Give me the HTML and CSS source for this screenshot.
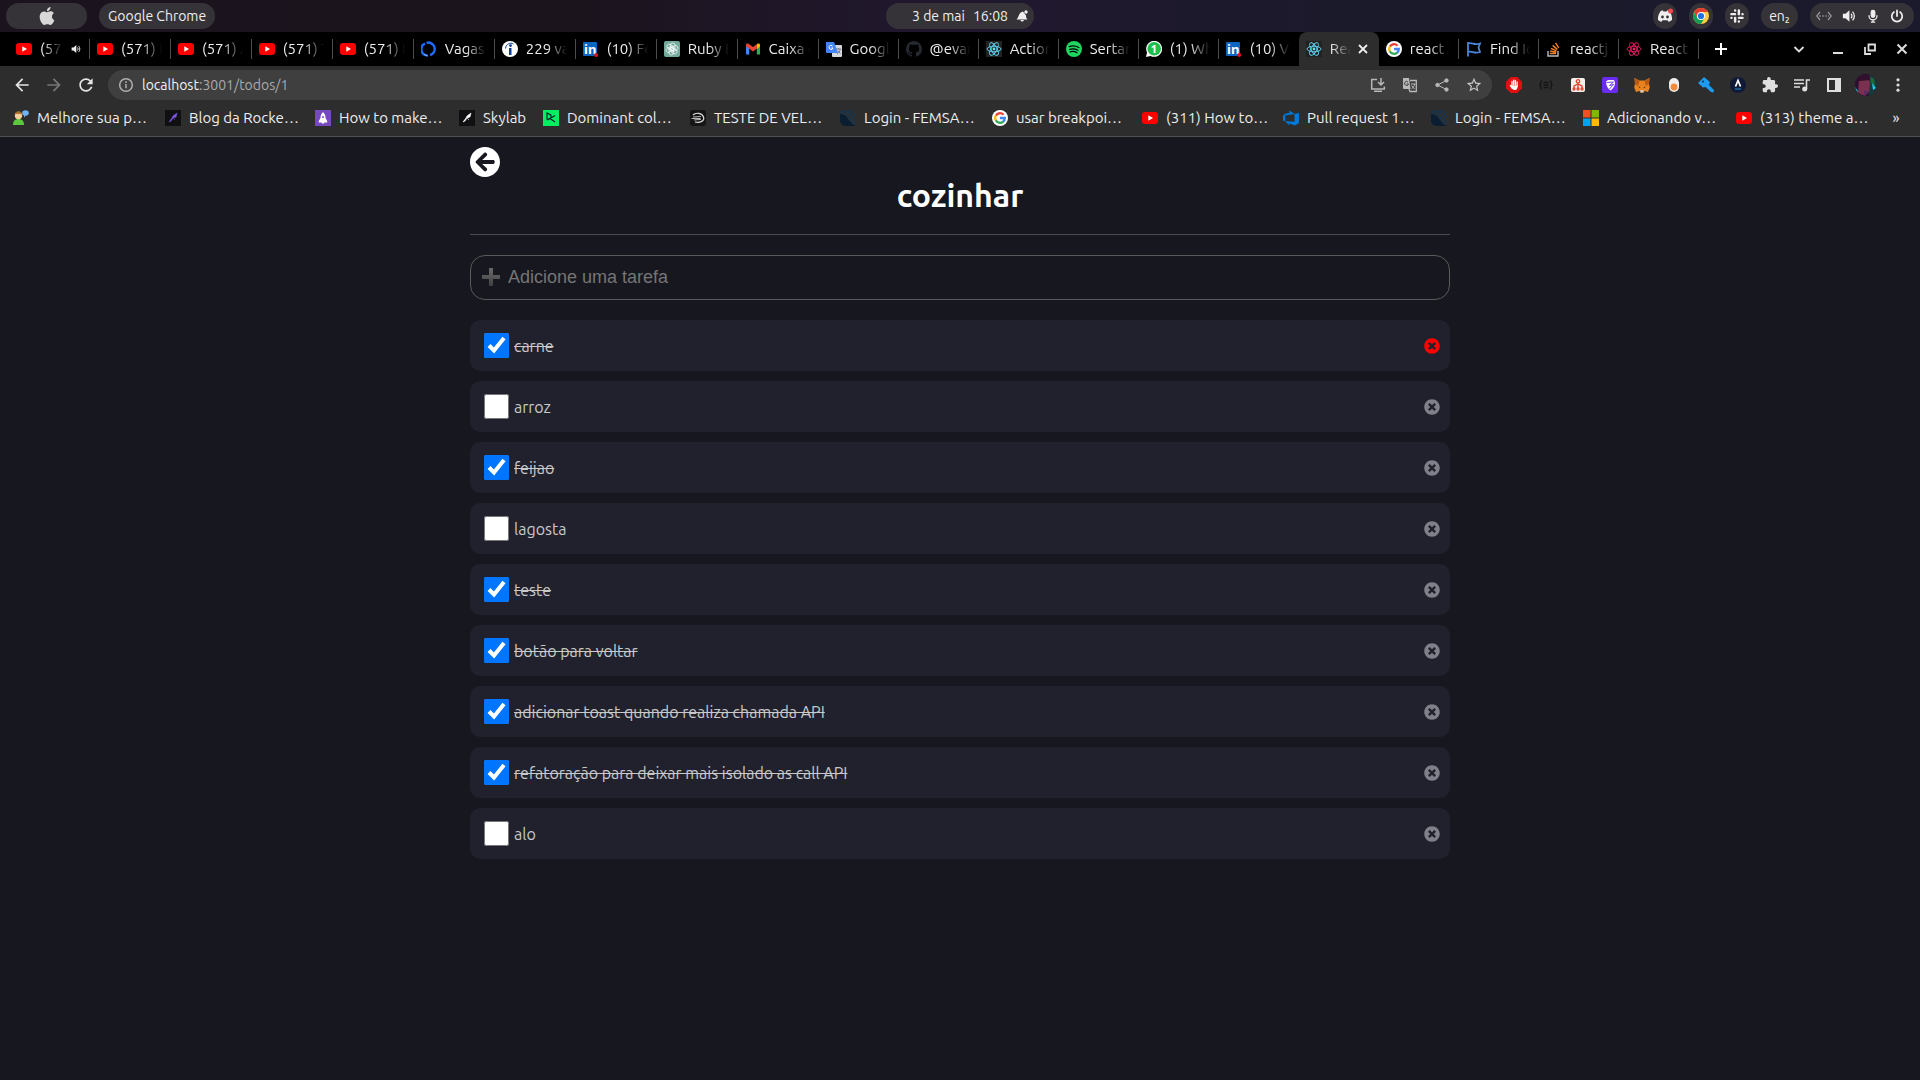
FILE: index.html
```html
<!DOCTYPE html>
<html lang="pt-BR">
<head>
<meta charset="utf-8">
<title>React App</title>
<link rel="stylesheet" href="styles.css">
</head>
<body>
<svg class="sprite" aria-hidden="true">
  <symbol id="youtube" viewBox="0 0 16 16"><rect y="2" width="16" height="12" rx="3" fill="#f00"/><path d="M6.3 5.3v5.4L11 8z" fill="#fff"/></symbol>
  <symbol id="google" viewBox="0 0 16 16"><circle cx="8" cy="8" r="8" fill="#fff"/><g fill="none" stroke-width="2.3"><path d="M3.9 5.6A4.8 4.8 0 0 1 11.5 4.7" stroke="#ea4335"/><path d="M3.9 5.5a4.8 4.8 0 0 0 0 5" stroke="#fbbc05"/><path d="M3.8 10.3a4.8 4.8 0 0 0 7.4 1.3" stroke="#34a853"/><path d="M8 8h4.8a4.8 4.8 0 0 1-1.8 3.8" stroke="#4285f4"/></g></symbol>
  <symbol id="linkedin" viewBox="0 0 16 16"><rect width="14" height="14" x="0" y="1" rx="1" fill="#0a66c2"/><text x="1" y="13" font-size="13" font-weight="700" font-family="Noto Sans, sans-serif" fill="#fff">in</text><circle cx="13.2" cy="14" r="2" fill="#e0101c"/></symbol>
  <symbol id="react" viewBox="0 0 16 16"><circle cx="8" cy="8" r="1.4" fill="currentColor"/><g fill="none" stroke="currentColor" stroke-width=".9"><ellipse cx="8" cy="8" rx="7" ry="2.8"/><ellipse cx="8" cy="8" rx="7" ry="2.8" transform="rotate(60 8 8)"/><ellipse cx="8" cy="8" rx="7" ry="2.8" transform="rotate(120 8 8)"/></g></symbol>
  <symbol id="femsa" viewBox="0 0 16 16"><path d="M0 4c5 0 7 3 9 6s4 5 7 6H6C2 16 0 13 0 10z" fill="#0b1d30"/><path d="M1 1c7 0 9 3 11 6s3 4 4 4M6 0c5 0 8 3 10 7M0 3c6 0 8 3 10 6s4 5 6 5" fill="none" stroke="#12395a" stroke-width="1.2"/></symbol>
  <symbol id="rocketseat" viewBox="0 0 16 16"><rect width="16" height="16" fill="#101012"/><path d="M4 12l3-4 1-2 4-3-1 4-3 1-2 3zM8 8l2 2" fill="currentColor" stroke="currentColor" stroke-width=".6"/></symbol>
  <symbol id="remove" viewBox="0 0 512 512"><path fill="currentColor" d="M256 8C119 8 8 119 8 256s111 248 248 248 248-111 248-248S393 8 256 8zm121.600 313.100c4.700 4.700 4.700 12.300 0 17L338 377.600c-4.700 4.700-12.300 4.700-17 0L256 312l-65.100 65.600c-4.700 4.700-12.300 4.700-17 0L134.400 338c-4.700-4.700-4.700-12.300 0-17l65.600-65-65.600-65.100c-4.700-4.700-4.700-12.300 0-17l39.600-39.600c4.700-4.700 12.300-4.700 17 0l65 65.700 65.100-65.600c4.700-4.700 12.300-4.700 17 0l39.600 39.600c4.700 4.700 4.700 12.300 0 17L312 256l65.600 65.100z"/></symbol>
  <symbol id="volume" viewBox="0 0 16 16"><path d="M1 5.500h3L8.500 1.500v13L4 10.500H1z" fill="currentColor"/><path d="M10.300 5.500a3.500 3.500 0 0 1 0 5M12 3a7 7 0 0 1 0 10" fill="none" stroke="currentColor" stroke-width="1.500"/></symbol>
</svg>

<header class="system-bar">
  <div class="system-side">
    <button class="pill pill-logo" aria-label="Menu"><svg class="icon-logo" viewBox="0 0 24 24" fill="#d8d8d8"><path d="M12.152 6.896c-.948 0-2.415-1.078-3.960-1.040-2.040.027-3.910 1.183-4.961 3.014-2.117 3.675-.546 9.103 1.519 12.090 1.013 1.454 2.208 3.090 3.792 3.039 1.520-.065 2.090-.987 3.935-.987 1.831 0 2.350.987 3.960.948 1.637-.026 2.676-1.480 3.676-2.948 1.156-1.688 1.636-3.325 1.662-3.415-.039-.013-3.182-1.221-3.220-4.857-.026-3.040 2.480-4.494 2.597-4.559-1.429-2.090-3.623-2.324-4.390-2.376-2-.156-3.675 1.090-4.610 1.090zM15.530 3.830c.843-1.012 1.400-2.427 1.245-3.830-1.207.052-2.662.805-3.532 1.818-.780.896-1.454 2.338-1.273 3.714 1.338.104 2.715-.688 3.559-1.701"/></svg></button>
    <button class="pill">Google Chrome</button>
  </div>
  <button class="pill pill-clock"><span>3 de mai</span><span>16:08</span><svg class="icon-small" viewBox="0 0 12 12" fill="#eee"><path d="M.5 9.500C3 7.500 2.500 2 7 1.500l3 4c0 2 .5 3 1.500 4zM4.500 10h3.500c-1 2-3 2-3.500 0z"/><circle cx="10" cy="2" r="1.700"/></svg></button>
  <div class="system-side system-right">
    <button class="pill pill-round" aria-label="Discord"><svg class="icon" viewBox="0 0 16 16"><path d="M3.500 3.200C5 2.500 6 2.600 6 2.600l.4.800h3.200l.4-.8s1 0 2.500.7C14.500 6 15.300 9 15 12c-1.500 1.400-3.500 1.800-3.500 1.800l-1-1.500h-5l-1 1.500S2.500 13.400 1 12c-.3-3 .5-6 2.500-8.800z" fill="#eee"/><circle cx="5.500" cy="9" r="1.400" fill="#333"/><circle cx="10.500" cy="9" r="1.400" fill="#333"/><circle cx="13.500" cy="3" r="2.500" fill="#f04747"/></svg></button>
    <button class="pill pill-round" aria-label="Chrome"><svg class="icon" viewBox="0 0 16 16"><circle cx="8" cy="8" r="8" fill="#ffcd40"/><path d="M1.070 4A8 8 0 0 1 14.930 4H8L4.500 10z" fill="#e33b2e"/><path d="M1.070 4A8 8 0 0 0 8 16l3.500-6H4.500z" fill="#0f9d58"/><circle cx="8" cy="8" r="4" fill="#fff"/><circle cx="8" cy="8" r="3.100" fill="#1a73e8"/></svg></button>
    <button class="pill pill-round" aria-label="Slack"><svg class="icon-tray" viewBox="0 0 24 24" fill="none" stroke="#eee" stroke-width="4.200" stroke-linecap="round"><path d="M2.500 8.800h6M15.200 2.500v6.300M15.500 15.200h6M8.800 15.200v6.300M8.800 2.500v.1M21.400 8.800h.1M15.200 21.400v.1M2.500 15.200h.1"/></svg></button>
    <button class="pill pill-lang">en₂</button>
    <button class="pill pill-tray" aria-label="Sistema">
      <svg class="icon" viewBox="0 0 16 16" fill="none" stroke="#999" stroke-width="1.200"><path d="M4 4L.7 8 4 12M12 4l3.300 4L12 12"/><path d="M3 8h10" stroke-dasharray="2 1"/></svg>
      <svg class="icon-tray"><use href="#volume"/></svg>
      <svg class="icon-tray" viewBox="0 0 16 16" fill="none" stroke="#eee" stroke-width="1.500"><rect x="6" y="1.500" width="4" height="8" rx="2" fill="#eee"/><path d="M3.500 7v1a4.500 4.500 0 0 0 9 0V7M8 12.500V15M5.500 15h5"/></svg>
      <svg class="icon-tray" viewBox="0 0 16 16" fill="none" stroke="#eee" stroke-width="2" stroke-linecap="round"><path d="M4.500 3.500a6 6 0 1 0 7 0M8 1.500V8"/></svg>
    </button>
  </div>
</header>

<nav class="tab-bar" aria-label="Abas">
  <div class="tabs">
    <div class="tab"><button class="tab-open"><svg class="icon"><use href="#youtube"/></svg><span class="tab-title">(571)</span><svg class="icon-audio"><use href="#volume"/></svg></button></div>
    <div class="tab"><button class="tab-open"><svg class="icon"><use href="#youtube"/></svg><span class="tab-title">(571) React</span></button></div>
    <div class="tab"><button class="tab-open"><svg class="icon"><use href="#youtube"/></svg><span class="tab-title">(571) Aula</span></button></div>
    <div class="tab"><button class="tab-open"><svg class="icon"><use href="#youtube"/></svg><span class="tab-title">(571) Testes</span></button></div>
    <div class="tab"><button class="tab-open"><svg class="icon"><use href="#youtube"/></svg><span class="tab-title">(571) Live</span></button></div>
    <div class="tab"><button class="tab-open"><svg class="icon" viewBox="0 0 16 16" fill="none" stroke="#1b6cff" stroke-width="2.400"><path d="M4 2.500A6.300 6.300 0 0 0 6.500 14.500M5.500 1.800A6.300 6.300 0 1 1 9 14.200"/><path d="M3 13.500l4 1.500" stroke="#7db2ff" stroke-width="1"/></svg><span class="tab-title">Vagas</span></button></div>
    <div class="tab"><button class="tab-open"><svg class="icon" viewBox="0 0 16 16"><circle cx="8" cy="8" r="8" fill="#fff"/><path d="M7 7h2.500v7H7z" fill="#0a3d91"/><circle cx="8.500" cy="4.600" r="1.400" fill="#0a3d91"/><path d="M3.500 7.500C4 3 8 1 11.500 3" fill="none" stroke="#0a3d91"/></svg><span class="tab-title">229 vagas</span></button></div>
    <div class="tab"><button class="tab-open"><svg class="icon"><use href="#linkedin"/></svg><span class="tab-title">(10) Feed</span></button></div>
    <div class="tab"><button class="tab-open"><svg class="icon" viewBox="0 0 16 16"><rect width="16" height="16" rx="2" fill="#74aa9c"/><g fill="none" stroke="#fff" stroke-width=".7"><rect x="6.500" y="2" width="4.500" height="7.500" rx="2.200"/><rect x="6.500" y="2" width="4.500" height="7.500" rx="2.200" transform="rotate(60 8 8)"/><rect x="6.500" y="2" width="4.500" height="7.500" rx="2.200" transform="rotate(120 8 8)"/><rect x="6.500" y="2" width="4.500" height="7.500" rx="2.200" transform="rotate(180 8 8)"/><rect x="6.500" y="2" width="4.500" height="7.500" rx="2.200" transform="rotate(240 8 8)"/><rect x="6.500" y="2" width="4.500" height="7.500" rx="2.200" transform="rotate(300 8 8)"/></g></svg><span class="tab-title">Ruby Enum</span></button></div>
    <div class="tab"><button class="tab-open"><svg class="icon" viewBox="0 0 16 16"><path d="M1 3.500v10h3.200V7z" fill="#4285f4"/><path d="M15 3.500v10h-3.200V7z" fill="#34a853"/><path d="M11.800 4v4L15 5.500V4c0-1.600-1.600-2-2.600-1.200z" fill="#fbbc04"/><path d="M1 4c0-1.600 1.600-2 2.600-1.200L8 6l4-3v4.500L8 10.500l-4-3-3-2.200z" fill="#ea4335"/></svg><span class="tab-title">Caixa de</span></button></div>
    <div class="tab"><button class="tab-open"><svg class="icon" viewBox="0 0 16 16"><rect x="6" y="4" width="10" height="12" rx="1" fill="#d5d8dc"/><path d="M0 1h8l4 11H1a1 1 0 0 1-1-1z" fill="#4285f4"/><path d="M6.500 5A2 2 0 1 0 7 7H5.300" fill="none" stroke="#fff"/><path d="M10 8h5M12.500 7v1M11 13c2-1 3-3 3-5M11.500 9.500l3 3" fill="none" stroke="#667" stroke-width=".8"/></svg><span class="tab-title">Google</span></button></div>
    <div class="tab"><button class="tab-open"><svg class="icon" viewBox="0 0 16 16" fill="#24292f"><path d="M8 0C3.580 0 0 3.580 0 8c0 3.540 2.290 6.530 5.470 7.590.4.070.55-.17.55-.38 0-.19-.01-.82-.01-1.490-2.010.37-2.530-.49-2.690-.94-.09-.23-.48-.94-.82-1.130-.28-.15-.68-.52-.01-.53.63-.01 1.080.58 1.230.82.72 1.210 1.870.87 2.330.66.07-.52.28-.87.51-1.070-1.780-.2-3.640-.89-3.640-3.950 0-.87.31-1.590.82-2.150-.08-.2-.36-1.020.08-2.120 0 0 .67-.21 2.200.82.64-.18 1.320-.27 2-.27s1.360.09 2 .27c1.530-1.040 2.200-.82 2.200-.82.44 1.100.16 1.920.08 2.120.51.56.82 1.270.82 2.150 0 3.070-1.870 3.750-3.650 3.950.29.25.54.73.54 1.480 0 1.070-.01 1.930-.01 2.200 0 .21.15.46.55.38A8 8 0 0 0 16 8c0-4.420-3.580-8-8-8z"/></svg><span class="tab-title">@evan</span></button></div>
    <div class="tab"><button class="tab-open"><svg class="icon react-app"><use href="#react"/></svg><span class="tab-title">Actions</span></button></div>
    <div class="tab"><button class="tab-open"><svg class="icon" viewBox="0 0 16 16"><circle cx="8" cy="8" r="8" fill="#1ed760"/><path d="M3.200 5.600c3-1 6.600-.7 9.600.9M3.700 8.300c2.600-.8 5.700-.5 8.200.9M4.200 10.800c2.200-.6 4.500-.4 6.700.8" fill="none" stroke="#000" stroke-width="1.300" stroke-linecap="round"/></svg><span class="tab-title">Sertanejo</span></button></div>
    <div class="tab"><button class="tab-open"><svg class="icon" viewBox="0 0 16 16"><path d="M0 16l1-4.500A8 8 0 1 1 4.500 15z" fill="#fff"/><circle cx="8.200" cy="7.800" r="6.800" fill="#1cbf4a"/><text x="8" y="12" font-size="11" font-weight="700" text-anchor="middle" font-family="Noto Sans, sans-serif" fill="#fff">1</text></svg><span class="tab-title">(1) WhatsApp</span></button></div>
    <div class="tab tab-plain"><button class="tab-open"><svg class="icon"><use href="#linkedin"/></svg><span class="tab-title">(10) Vagas</span></button></div>
    <div class="tab tab-active tab-plain"><button class="tab-open"><svg class="icon react-app"><use href="#react"/></svg><span class="tab-title">React App</span></button><button class="tab-close" aria-label="Fechar aba"><svg class="icon-small" viewBox="0 0 12 12" stroke="#eee" stroke-width="1.800"><path d="M2 2l8 8M10 2l-8 8"/></svg></button></div>
    <div class="tab"><button class="tab-open"><svg class="icon"><use href="#google"/></svg><span class="tab-title">react icons</span></button></div>
    <div class="tab"><button class="tab-open"><svg class="icon" viewBox="0 0 16 16" fill="none" stroke="#4a86d8" stroke-width="1.800"><path d="M2 1v14.500M2 2.500c4-1.500 6 2 12 0L12.500 6.500 14 11c-6 2-8-1.500-12 0"/></svg><span class="tab-title">Find Icons</span></button></div>
    <div class="tab"><button class="tab-open"><svg class="icon" viewBox="0 0 16 16" fill="none" stroke-width="1.400"><path d="M2 10v5h10v-5" stroke="#bcbbbb"/><path d="M4 12.500h6M4.200 10l6 1.200M5 7.300l5.500 2.500M6.700 4.400l4.600 4M9.500 1.800l3.300 5" stroke="#f48024"/></svg><span class="tab-title">reactjs - how</span></button></div>
    <div class="tab"><button class="tab-open"><svg class="icon react-icons"><use href="#react"/></svg><span class="tab-title">React Ic</span></button></div>
  </div>
  <div class="window-controls">
    <button class="strip-button new-tab" aria-label="Nova aba"><svg class="icon-small" viewBox="0 0 12 12" stroke="#fff" stroke-width="2"><path d="M6 0v12M0 6h12"/></svg></button>
    <button class="strip-button" aria-label="Pesquisar abas"><svg class="icon-small" viewBox="0 0 12 12" fill="none" stroke="#ddd" stroke-width="1.800"><path d="M1.500 4L6 8.500 10.500 4"/></svg></button>
    <button class="strip-button" aria-label="Minimizar"><svg class="icon-small" viewBox="0 0 12 12" stroke="#ddd" stroke-width="2"><path d="M1 10h10"/></svg></button>
    <button class="strip-button" aria-label="Restaurar"><svg class="icon-small" viewBox="0 0 12 12" fill="none" stroke="#ddd" stroke-width="1.800"><path d="M4.500 1.500h6.500v6H4.500zM1 4v7h6"/></svg></button>
    <button class="strip-button" aria-label="Fechar"><svg class="icon-small" viewBox="0 0 12 12" stroke="#ddd" stroke-width="2"><path d="M1.500 1.500l9 9M10.500 1.500l-9 9"/></svg></button>
  </div>
</nav>

<div class="toolbar">
  <button class="tool" aria-label="Voltar"><svg class="icon-nav" viewBox="0 0 24 24" fill="#e4e4e4"><path d="M20 11H7.830l5.590-5.590L12 4l-8 8 8 8 1.410-1.410L7.830 13H20v-2z"/></svg></button>
  <button class="tool" aria-label="Avançar"><svg class="icon-nav" viewBox="0 0 24 24" fill="#777"><path d="M4 11h12.170l-5.590-5.590L12 4l8 8-8 8-1.410-1.410L16.170 13H4v-2z"/></svg></button>
  <button class="tool" aria-label="Recarregar"><svg class="icon-nav" viewBox="0 0 24 24" fill="#e4e4e4"><path d="M17.650 6.350C16.200 4.900 14.210 4 12 4c-4.420 0-7.990 3.580-7.990 8s3.570 8 7.990 8c3.730 0 6.840-2.550 7.730-6h-2.080c-.82 2.330-3.040 4-5.650 4-3.310 0-6-2.690-6-6s2.690-6 6-6c1.660 0 3.140.69 4.220 1.780L13 11h7V4l-2.350 2.350z"/></svg></button>
  <div class="address">
    <svg class="icon" viewBox="0 0 16 16" fill="none" stroke="#b0b0b0" stroke-width="1.500"><circle cx="8" cy="8" r="6.300"/><path d="M8 7v4.300M8 4.300v1.600"/></svg>
    <div class="url"><span class="url-host">localhost</span>:3001/todos/1</div>
    <button class="tool" aria-label="Instalar"><svg class="icon" viewBox="0 0 16 16" fill="none" stroke="#b8b8b8" stroke-width="1.500"><path d="M7 2.500H1.700V12h12.600V9.500M4 14.200h8M11 1v7M8 5l3 3 3-3"/></svg></button>
    <button class="tool" aria-label="Traduzir"><svg class="icon" viewBox="0 0 16 16"><path d="M1 1h6l1.500 11H2a1 1 0 0 1-1-1z" fill="#b8b8b8"/><path d="M8 3.500h6.300v11H8l-1-2.500" fill="none" stroke="#b8b8b8" stroke-width="1.300"/><path d="M6 5a2 2 0 1 0 .5 2H4.800" fill="none" stroke="#3f3f3f"/><path d="M9 7h4.500M12.500 7c0 2-1.500 4-3 5M9.500 8.500l3 3.500" fill="none" stroke="#b8b8b8"/></svg></button>
    <button class="tool" aria-label="Compartilhar"><svg class="icon" viewBox="0 0 16 16" fill="#b8b8b8" stroke="#b8b8b8"><path d="M12.500 3.500L3.500 8l9 4.500" fill="none"/><circle cx="3.500" cy="8" r="1.700"/><circle cx="12.500" cy="3.500" r="1.700"/><circle cx="12.500" cy="12.500" r="1.700"/></svg></button>
    <button class="tool" aria-label="Favoritar"><svg class="icon" viewBox="1 1 22 22" fill="#c8c8c8"><path d="M22 9.240l-7.190-.62L12 2 9.190 8.630 2 9.240l5.460 4.730L5.820 21 12 17.270 18.180 21l-1.630-7.030L22 9.240zM12 15.400l-3.760 2.270 1-4.280-3.320-2.880 4.380-.38L12 6.100l1.710 4.040 4.380.38-3.320 2.880 1 4.280L12 15.400z"/></svg></button>
  </div>
  <div class="extensions">
    <button class="tool" aria-label="AdBlock"><svg class="icon" viewBox="0 0 16 16"><path d="M4.700 0h6.600L16 4.700v6.600L11.300 16H4.700L0 11.300V4.700z" fill="#e01010"/><path d="M6 9V4.500M7.700 8V3.200M9.400 8V3.500M11.100 9V5M4.300 8.500l2 3" stroke="#fff" stroke-width="1.300" stroke-linecap="round"/><path d="M5.400 8.500h6.300c0 2.500-.8 4.500-2.700 4.500s-2.600-1-3.600-2.500z" fill="#fff"/></svg></button>
    <button class="tool" aria-label="JSON"><svg class="icon" viewBox="0 0 16 16" fill="none" stroke="#161616" stroke-width="1.400"><path d="M4 3.500c-2 0 0 4-2.500 4.500C4 8.500 2 12.500 4 12.500M12 3.500c2 0 0 4 2.500 4.500-2.500.5-.5 4.500-2.500 4.500M5.500 5.500h5M5.500 8h5M5.500 10.500h5"/></svg></button>
    <button class="tool" aria-label="Mapa"><svg class="icon" viewBox="0 0 16 16"><rect x="1" y="1" width="14" height="14" rx="2" fill="#f7efec"/><g fill="none" stroke="#e2452b" stroke-width="1.300"><circle cx="8" cy="4.300" r="1.700"/><path d="M8 6v6M4 11V9l4-2 4 2v2"/><circle cx="4" cy="12" r="1"/><circle cx="8" cy="12" r="1"/><circle cx="12" cy="12" r="1"/></g></svg></button>
    <button class="tool" aria-label="Proteção"><svg class="icon" viewBox="0 0 16 16"><rect width="16" height="16" rx="2" fill="#6a2bf2"/><path d="M4 4.500L6 3h6l1 2.500c0 4-2 6-4.500 8C6 11.500 4 9 4 4.500z" fill="#fff"/><path d="M4.500 5.500l7-.5-4 3.500 4-1-4 4.500" fill="none" stroke="#6a2bf2" stroke-width=".9"/></svg></button>
    <button class="tool" aria-label="MetaMask"><svg class="icon" viewBox="0 0 16 16"><path d="M.5 1l5 2.500h5l5-2.500L15 7l.8 3.500L14 15l-3.500-1-1 1.500h-3l-1-1.500L2 15 .2 10.500 1 7z" fill="#e8821e"/><path d="M.5 1l5 3L4 9 1 7zM15.500 1l-5 3L12 9l3-2z" fill="#b85a18"/><path d="M4.500 9.500l2 .7-1 .8zM11.500 9.500l-2 .7 1 .8z" fill="#222"/><path d="M6.500 13h3v2.500h-3z" fill="#ccc"/></svg></button>
    <button class="tool" aria-label="Gravador"><svg class="icon" viewBox="0 0 16 16"><rect x="3" y="1" width="10" height="14" rx="5" fill="#eee"/><circle cx="8" cy="10" r="3.400" fill="#f58a3c"/></svg></button>
    <button class="tool" aria-label="Chaves"><svg class="icon" viewBox="0 0 16 16"><path d="M6 0l6 5-1 3 5 5-.5 2.500L13 15 7.500 10 5 10.500 0 6z" fill="#1d9bf0"/><circle cx="5" cy="4.500" r="1" fill="#2d2d2d"/></svg></button>
    <button class="tool" aria-label="Apollo"><svg class="icon" viewBox="0 0 16 16"><circle cx="8" cy="8" r="8" fill="#101a38"/><path d="M5.500 9.500L8 3.500l2.500 6" fill="none" stroke="#fff" stroke-width="1.700"/><path d="M5 12h6" stroke="#1c6a9c" stroke-width="1.500"/></svg></button>
    <button class="tool" aria-label="Extensões"><svg class="icon" viewBox="1 1 22 22" fill="#dedede"><path d="M20.500 11H19V7c0-1.100-.9-2-2-2h-4V3.500a2.500 2.500 0 0 0-5 0V5H4c-1.100 0-1.990.9-1.990 2v3.800H3.500c1.490 0 2.700 1.210 2.700 2.700s-1.210 2.700-2.700 2.700H2V20c0 1.100.9 2 2 2h3.800v-1.500c0-1.490 1.210-2.700 2.700-2.700s2.700 1.210 2.700 2.700V22H17c1.100 0 2-.9 2-2v-4h1.500a2.500 2.500 0 0 0 0-5z"/></svg></button>
    <button class="tool" aria-label="Mídia"><svg class="icon" viewBox="0 0 16 16" fill="none" stroke="#dedede" stroke-width="1.600"><path d="M0 3h10M0 6.500h10M0 10h6M12.500 12V3H16"/><circle cx="10.700" cy="12" r="1.700" fill="#dedede"/></svg></button>
    <button class="tool" aria-label="Painel lateral"><svg class="icon" viewBox="0 0 16 16"><path d="M1 1h14v14H1zM3 3v10h6V3z" fill="#dedede" fill-rule="evenodd"/></svg></button>
    <button class="tool" aria-label="Perfil"><svg class="avatar" viewBox="0 0 22 22"><clipPath id="round"><circle cx="11" cy="11" r="11"/></clipPath><g clip-path="url(#round)"><path d="M0 0h22v22H0z" fill="#2b1230"/><path d="M14 0h8v22h-8z" fill="#173a3a"/><path d="M4 6l9-2 2 5-1 9-4 4-7-3z" fill="#7d2f50"/><path d="M0 0h14l2 6-12 1-4 5z" fill="#30102c"/><path d="M15 3l4 2 1 7-4-3z" fill="#1d6b3a"/><path d="M0 13l3 4-2 4M17 9l4 5-3 2M18 17l3-2" fill="#26c9e8"/><path d="M9 22v-6l5 2" fill="#5b2b61"/></g></svg></button>
    <button class="tool" aria-label="Mais opções"><svg class="icon" viewBox="0 0 16 16" fill="#dedede"><circle cx="8" cy="2.800" r="1.600"/><circle cx="8" cy="8" r="1.600"/><circle cx="8" cy="13.200" r="1.600"/></svg></button>
  </div>
</div>

<nav class="bookmarks" aria-label="Favoritos">
  <a class="bookmark" href="#"><svg class="icon" viewBox="0 0 16 16"><path d="M0 15c0-4 2-6 5.500-6S11 11 11 15z" fill="#5cc83c"/><circle cx="5.500" cy="5.500" r="3.700" fill="#f4cf9a"/><path d="M2 4.500C2 0 9 0 9 4.500 7 4 4 3 2 4.500z" fill="#a26a2a"/><ellipse cx="12.500" cy="3" rx="3.300" ry="2.700" fill="#6fb4f5"/><path d="M11 5v2.500l2-2" fill="#6fb4f5"/></svg>Melhore sua p…</a>
  <a class="bookmark" href="#"><svg class="icon violet"><use href="#rocketseat"/></svg>Blog da Rocke…</a>
  <a class="bookmark" href="#"><svg class="icon" viewBox="0 0 16 16"><rect width="16" height="16" fill="#764abc"/><path d="M8 2c2 2 2.500 4 2.500 6l1.700 3v1.500H9.500l-.5 1H7l-.5-1H3.800V11l1.700-3C5.500 6 6 4 8 2z" fill="#fff"/><circle cx="8" cy="7" r="1" fill="#764abc"/></svg>How to make…</a>
  <a class="bookmark" href="#"><svg class="icon white"><use href="#rocketseat"/></svg>Skylab</a>
  <a class="bookmark" href="#"><svg class="icon" viewBox="0 0 16 16"><rect width="16" height="16" fill="#03ef62"/><path d="M4 9.500V3l4 2.200v2.600L4 10M12 5.500L7 8.500l5 3.500" fill="none" stroke="#05192d" stroke-width="1.100"/></svg>Dominant col…</a>
  <a class="bookmark" href="#"><svg class="icon" viewBox="0 0 16 16"><rect width="16" height="16" rx="3" fill="#151515"/><path d="M3 5c3-3 9-2 10.500 2S10 13 5 12" fill="none" stroke="#ddd" stroke-width="1.200"/><path d="M1.500 8.500h9M3 7l8-.5M4 10l7-.7" stroke="#ddd" stroke-width=".8"/></svg>TESTE DE VEL…</a>
  <a class="bookmark" href="#"><svg class="icon"><use href="#femsa"/></svg>Login - FEMSA…</a>
  <a class="bookmark" href="#"><svg class="icon"><use href="#google"/></svg>usar breakpoi…</a>
  <a class="bookmark" href="#"><svg class="icon"><use href="#youtube"/></svg>(311) How to…</a>
  <a class="bookmark" href="#"><svg class="icon" viewBox="0 0 16 16" fill="#0078d7"><path d="M16 3v10l-4 2.500-6-2v2L2.300 11l9.200.8V4zM11.700 4L6.500.5v2.200L1.500 4 0 6v4.500l2.200 1V5.500z"/></svg>Pull request 1…</a>
  <a class="bookmark" href="#"><svg class="icon"><use href="#femsa"/></svg>Login - FEMSA…</a>
  <a class="bookmark" href="#"><svg class="icon" viewBox="0 0 16 16"><path d="M0 0h7.500v7.500H0z" fill="#f25022"/><path d="M8.500 0H16v7.500H8.500z" fill="#7fba00"/><path d="M0 8.500h7.500V16H0z" fill="#00a4ef"/><path d="M8.500 8.500H16V16H8.500z" fill="#ffb900"/></svg>Adicionando v…</a>
  <a class="bookmark" href="#"><svg class="icon"><use href="#youtube"/></svg>(313) theme a…</a>
  <button class="more-bookmarks" aria-label="Mais favoritos">»</button>
</nav>

<main class="page">
  <a class="back" href="#" aria-label="Voltar"><svg class="back-icon" viewBox="8 8 496 496" fill="#fff"><path d="M256 504C119 504 8 393 8 256S119 8 256 8s248 111 248 248-111 248-248 248zm28.900-143.600L209.400 288H392c13.300 0 24-10.700 24-24v-16c0-13.300-10.700-24-24-24H209.400l75.500-72.400c9.700-9.300 9.900-24.800.4-34.300l-11-10.900c-9.400-9.400-24.600-9.400-33.900 0L107.700 239c-9.400 9.400-9.400 24.600 0 33.900l132.700 132.700c9.400 9.400 24.600 9.400 33.900 0l11-10.900c9.500-9.500 9.300-25-.4-34.300z"/></svg></a>
  <h1 class="title">cozinhar</h1>
  <form class="new-task">
    <svg class="plus" viewBox="0 0 18 18"><linearGradient id="fade" x1="0" y1="0" x2="0" y2="1"><stop offset="0" stop-color="#6a6a6a"/><stop offset="1" stop-color="#404040"/></linearGradient><path d="M7 0h4v7h7v4h-7v7H7v-7H0V7h7z" fill="url(#fade)"/></svg>
    <input class="new-task-input" type="text" placeholder="Adicione uma tarefa" aria-label="Adicione uma tarefa">
  </form>
  <ul class="tasks">
    <li class="task"><label class="task-label"><input class="task-check" type="checkbox" checked><span class="task-name">carne</span></label><button class="task-remove task-remove-hot" aria-label="Remover carne"><svg class="icon"><use href="#remove"/></svg></button></li>
    <li class="task"><label class="task-label"><input class="task-check" type="checkbox"><span class="task-name">arroz</span></label><button class="task-remove" aria-label="Remover arroz"><svg class="icon"><use href="#remove"/></svg></button></li>
    <li class="task"><label class="task-label"><input class="task-check" type="checkbox" checked><span class="task-name">feijao</span></label><button class="task-remove" aria-label="Remover feijao"><svg class="icon"><use href="#remove"/></svg></button></li>
    <li class="task"><label class="task-label"><input class="task-check" type="checkbox"><span class="task-name">lagosta</span></label><button class="task-remove" aria-label="Remover lagosta"><svg class="icon"><use href="#remove"/></svg></button></li>
    <li class="task"><label class="task-label"><input class="task-check" type="checkbox" checked><span class="task-name">teste</span></label><button class="task-remove" aria-label="Remover teste"><svg class="icon"><use href="#remove"/></svg></button></li>
    <li class="task"><label class="task-label"><input class="task-check" type="checkbox" checked><span class="task-name">botão para voltar</span></label><button class="task-remove" aria-label="Remover botão para voltar"><svg class="icon"><use href="#remove"/></svg></button></li>
    <li class="task"><label class="task-label"><input class="task-check" type="checkbox" checked><span class="task-name">adicionar toast quando realiza chamada API</span></label><button class="task-remove" aria-label="Remover adicionar toast"><svg class="icon"><use href="#remove"/></svg></button></li>
    <li class="task"><label class="task-label"><input class="task-check" type="checkbox" checked><span class="task-name">refatoração para deixar mais isolado as call API</span></label><button class="task-remove" aria-label="Remover refatoração"><svg class="icon"><use href="#remove"/></svg></button></li>
    <li class="task"><label class="task-label"><input class="task-check" type="checkbox"><span class="task-name">alo</span></label><button class="task-remove" aria-label="Remover alo"><svg class="icon"><use href="#remove"/></svg></button></li>
  </ul>
</main>
</body>
</html>
```
FILE: styles.css
```css
* { box-sizing: border-box; }
html, body { margin: 0; }
body {
  min-height: 100vh;
  background: #17171f;
  color: #eee;
  font: 14px/20px Ubuntu, "Noto Sans", sans-serif;
}
button { margin: 0; padding: 0; border: 0; background: none; color: inherit; font: inherit; cursor: pointer; }
a { color: inherit; text-decoration: none; }
svg { display: block; flex: none; }
.sprite { display: none; }
.icon { width: 16px; height: 16px; }
.icon-logo { width: 18px; height: 18px; }
.icon-small { width: 12px; height: 12px; }
.icon-tray { width: 14px; height: 14px; }
.icon-nav { width: 20px; height: 20px; }
.icon-audio { width: 10px; height: 10px; }

/* Desktop top bar */
.system-bar {
  display: flex;
  align-items: center;
  height: 32px;
  padding: 0 6px;
  background: linear-gradient(90deg, #1b131d, #1b141d 30%, #21182f 50%, #1b1a2b 70%, #1a1a2c);
}
.system-side { display: flex; flex: 1; gap: 12px; }
.system-right { justify-content: flex-end; }
.pill {
  display: flex;
  align-items: center;
  justify-content: center;
  height: 26px;
  padding: 0 9px;
  border-radius: 13px;
  background: #353337;
}
.pill-logo { width: 81px; }
.pill-clock { width: 148px; gap: 8px; padding: 0 4px 0 24px; }
.pill-round { width: 24px; padding: 0; }
.pill-lang { width: 37px; padding: 0; }
.pill-tray { gap: 10px; width: 104px; padding: 0 4px 0 0; }

/* Browser tabs */
.tab-bar { display: flex; height: 34px; padding-left: 9px; background: #000; }
.tabs { display: flex; flex: 1; min-width: 0; }
.tab { display: flex; flex: 80 1 0; align-items: center; min-width: 0; padding-left: 7px; font-size: 15px; }
.tab:nth-child(-n+10) { flex-grow: 81; }
.tab::after { content: ""; width: 1px; height: 20px; background: #4c4c4c; }
.tab-plain::after { visibility: hidden; }
.tab-active { border-radius: 8px 8px 0 0; background: #2d2d2d; }
.tab-open { display: flex; flex: 1; align-items: center; gap: 8px; min-width: 0; padding-right: 8px; text-align: left; }
.tab-active .tab-open { padding-right: 6px; }
.tab-close { padding-right: 9px; }
.tab-title {
  flex: 1;
  min-width: 0;
  overflow: hidden;
  white-space: nowrap;
  mask-image: linear-gradient(90deg, #000 calc(100% - 20px), transparent);
}
.react-app { color: #61dafb; background: #222; }
.react-icons { color: #e91e63; }
.window-controls { display: flex; align-items: center; padding-right: 2px; }
.strip-button { display: flex; justify-content: center; width: 32px; }
.window-controls .new-tab { width: 44px; margin-right: 40px; }
.strip-button:nth-child(2) { margin-right: 7px; }

/* Browser toolbar */
.toolbar { display: flex; align-items: center; height: 36px; padding: 2px 6px 0; background: #2d2d2d; }
.tool { display: flex; flex: none; align-items: center; justify-content: center; width: 32px; height: 30px; }
.address {
  display: flex;
  flex: 1;
  align-items: center;
  height: 30px;
  margin: 0 6px;
  padding: 0 2px 0 10px;
  border-radius: 15px;
  background: #3f3f3f;
}
.url { flex: 1; padding-left: 8px; color: #aaa; }
.url-host { color: #f2f2f2; }
.extensions { display: flex; }
.avatar { width: 22px; height: 22px; }

/* Bookmarks */
.bookmarks {
  display: grid;
  grid-template-columns: 152fr 150fr 144fr 84fr 147fr 150fr 152fr 150fr 141fr 148fr 152fr 153fr 152fr 16fr;
  align-items: center;
  height: 35px;
  padding: 0 16px 2px 13px;
  border-bottom: 1px solid #4f4f4f;
  background: #2d2d2d;
  font-size: 15px;
}
.bookmark { display: flex; align-items: center; gap: 8px; min-width: 0; white-space: nowrap; }
.violet { color: #7c54e8; }
.white { color: #fff; }

/* Todo page */
.page { display: flex; flex-direction: column; max-width: 980px; margin: 0 auto; padding-top: 10px; }
.back { align-self: flex-start; }
.back-icon { width: 30px; height: 30px; }
.title {
  margin: 0 0 20px;
  padding-bottom: 20px;
  border-bottom: 1px solid #4a4a4a;
  color: #fff;
  font-size: 32px;
  line-height: 37px;
  text-align: center;
}
.new-task {
  display: flex;
  align-items: center;
  gap: 8px;
  height: 45px;
  margin-bottom: 20px;
  padding: 0 11px 2px;
  border: 1px solid #5a5a5a;
  border-radius: 15px;
}
.plus { width: 18px; height: 18px; }
.new-task-input {
  flex: 1;
  min-width: 0;
  padding: 0;
  border: 0;
  outline: 0;
  background: none;
  color: #eee;
  font: 18px/24px "Liberation Sans", Arial, sans-serif;
}
.new-task-input::placeholder { color: #757575; }
.tasks { display: flex; flex-direction: column; gap: 10px; margin: 0; padding: 0; list-style: none; }
.task {
  display: flex;
  align-items: center;
  justify-content: space-between;
  padding: 10px;
  border-radius: 10px;
  background: #21212d;
  color: #c9c9c9;
  font-size: 16px;
}
.task-label { display: flex; align-items: center; }
.task-check { width: 25px; height: 25px; margin: 3px 5px 3px 4px; }
.task-check:checked + .task-name { text-decoration: line-through; }
.task-remove { color: #80808a; }
.task-remove-hot { color: #f00; }
```
